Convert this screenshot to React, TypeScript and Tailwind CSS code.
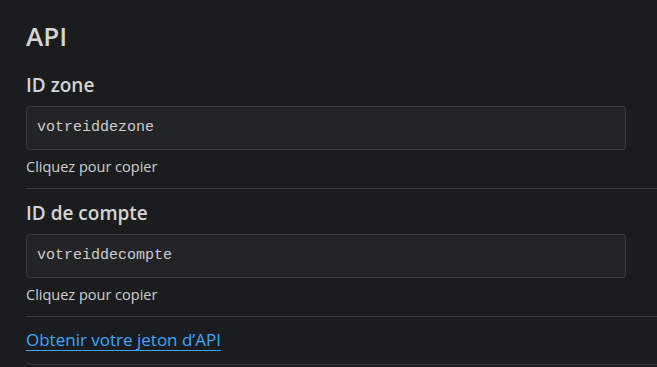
const Field = ({ label, value }: { label: string; value: string }) => {
  return (
    <div className="border-b border-[#3a3b3e] pt-[12px] pb-[11px]">
      <h3 className="text-[19px] leading-[24px] font-semibold text-[#d4d4d4]">{label}</h3>
      <div className="mt-[9px] w-[600px] h-[44px] flex items-center px-[10px] rounded-[4px] border border-[#3b3c3f] bg-[#232426] cursor-pointer">
        <code className="font-['Liberation_Mono',monospace] text-[15px] text-[#cccccc]">{value}</code>
      </div>
      <p className="mt-[7px] text-[14.5px] leading-[20px] text-[#cfcfcf]">Cliquez pour copier</p>
    </div>
  )
}

const App = () => {
  return (
    <div className="min-h-[367px] w-[657px] overflow-hidden bg-[#1b1c1e] font-['Open_Sans',sans-serif]">
      <div className="ml-[26px] w-[660px] pt-[20px]">
        <h2 className="text-[26px] leading-[32px] font-semibold text-[#d4d4d4]">API</h2>
        <div className="mt-[9px] border-b border-[#3a3b3e] rounded-b-[6px] pb-[12px]">
          <Field label="ID zone" value="votreiddezone" />
          <Field label="ID de compte" value="votreiddecompte" />
          <a href="#" className="inline-block mt-[12px] text-[17px] leading-[22px] text-[#3ea6ff] underline underline-offset-[4px]">
            Obtenir votre jeton d’API
          </a>
        </div>
      </div>
    </div>
  )
}
export default App
